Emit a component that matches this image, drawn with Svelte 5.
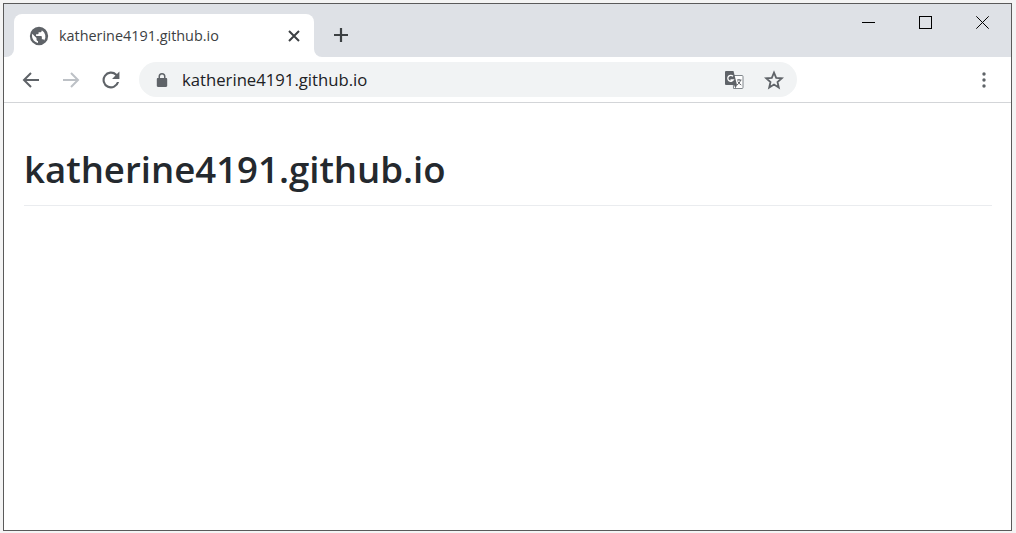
<script>
  const title = 'katherine4191.github.io';
</script>

<div class="window">
  <div class="tabstrip">
    <div class="tab">
      <svg class="favicon" width="20" height="20" viewBox="0 0 24 24"><path fill="#5f6368" d="M12 1a11 11 0 1 0 0 22 11 11 0 0 0 0-22zM3.600 12c0-.9.15-1.800.42-2.600L6.500 12l2.500 2.500v1.700c0 1 .8 1.800 1.800 1.800v2.300A8.400 8.400 0 0 1 3.600 12zm14.600 5.400c-.25-.75-.95-1.400-1.800-1.400h-1v-3c0-.55-.45-1-1-1H8.500v-2h2c.55 0 1-.45 1-1V7.500h2c1 0 1.800-.8 1.800-1.800v-.5a8.400 8.400 0 0 1 2.900 12.200z"/></svg>
      <span class="tab-title">{title}</span>
      <svg class="tab-close" width="12" height="12" viewBox="0 0 12 12"><path d="M1 1l10 10M11 1L1 11" stroke="#3c4043" stroke-width="2" fill="none"/></svg>
      <span class="curve left"></span>
      <span class="curve right"></span>
    </div>
    <svg class="new-tab" width="16" height="16" viewBox="0 0 16 16"><path d="M8 1v14M1 8h14" stroke="#3c4043" stroke-width="2.200" fill="none"/></svg>
    <div class="caption">
      <svg width="13" height="13" viewBox="0 0 13 13"><path d="M0 6.500h13" stroke="#000" fill="none"/></svg>
      <svg width="13" height="13" viewBox="0 0 13 13"><rect x=".5" y=".5" width="12" height="12" stroke="#000" fill="none"/></svg>
      <svg width="13" height="13" viewBox="0 0 13 13"><path d="M.3.300l12.400 12.400M12.700.300L.3 12.700" stroke="#000" fill="none"/></svg>
    </div>
  </div>

  <div class="toolbar">
    <svg class="nav" width="20" height="20" viewBox="0 0 20 20"><path d="M18 10H3M10 3l-7 7 7 7" stroke="#5f6368" stroke-width="2" fill="none"/></svg>
    <svg class="nav" width="20" height="20" viewBox="0 0 20 20"><path d="M2 10h15M10 3l7 7-7 7" stroke="#bdc1c6" stroke-width="2" fill="none"/></svg>
    <svg class="nav" width="20" height="20" viewBox="2.500 2.500 19 19"><path fill="#5f6368" d="M17.650 6.350A8 8 0 1 0 19.730 14h-2.080a6 6 0 1 1-1.410-6.240L13 11h7V4z"/></svg>
    <div class="omnibox">
      <svg class="lock" width="12" height="14" viewBox="0 0 12 14"><path fill="#5f6368" d="M10 5H9.500V3.500a3.500 3.500 0 0 0-7 0V5H2c-.8 0-1.200.5-1.200 1.200v6.600c0 .7.4 1.200 1.200 1.200h8c.8 0 1.200-.5 1.200-1.200V6.200c0-.7-.4-1.200-1.200-1.200zM4 5V3.500a2 2 0 0 1 4 0V5z"/></svg>
      <span class="url">{title}</span>
      <svg class="translate" width="20" height="20" viewBox="0 0 20 20">
        <path fill="#fff" stroke="#80868b" d="M9 5.500h9a1 1 0 0 1 1 1v11a1 1 0 0 1-1 1H9.500z"/>
        <path fill="#5f6368" d="M2 1h7.500l3.500 14H2a1 1 0 0 1-1-1V2a1 1 0 0 1 1-1z"/>
        <path fill="#5f6368" d="M10 15l1.500 3.500L13 15z"/>
        <path d="M9 6.200A3 3 0 1 0 9.300 10H6.500" stroke="#fff" stroke-width="1.300" fill="none"/>
        <path d="M13 10h4.500M15 9v1M16.500 10c-.5 2.500-2 4-3.500 5M13.800 11.500c.7 1.500 2 2.800 3.500 3.500" stroke="#5f6368" fill="none"/>
      </svg>
      <svg class="star" width="20" height="20" viewBox="0 0 20 20"><path d="M10 2.600l2.200 5.200 5.600.5-4.300 3.700 1.300 5.500L10 14.600l-4.800 2.900 1.300-5.500-4.300-3.700 5.600-.5z" stroke="#5f6368" stroke-width="1.800" fill="none"/></svg>
    </div>
    <svg class="menu" width="4" height="16" viewBox="0 0 4 16"><circle cx="2" cy="2" r="1.700" fill="#5f6368"/><circle cx="2" cy="8" r="1.700" fill="#5f6368"/><circle cx="2" cy="14" r="1.700" fill="#5f6368"/></svg>
  </div>

  <main class="page">
    <h1>{title}</h1>
  </main>
</div>

<style>
  :global(body) {
    margin: 0;
    background: #f4f4f4;
  }

  .window {
    box-sizing: border-box;
    width: 1009px;
    height: 528px;
    margin: 3px 0 0 3px;
    border: 1px solid #5a5a5a;
    background: #fff;
    display: flex;
    flex-direction: column;
    overflow: hidden;
  }

  .tabstrip {
    height: 53px;
    flex: none;
    display: flex;
    align-items: flex-end;
    background: #dee1e6;
    position: relative;
  }

  .tab {
    position: relative;
    box-sizing: border-box;
    width: 300px;
    height: 43px;
    margin-left: 10px;
    padding: 0 14px 0 15px;
    background: #fff;
    border-radius: 8px 8px 0 0;
    display: flex;
    align-items: center;
    flex: none;
  }

  .curve {
    position: absolute;
    bottom: 0;
    width: 8px;
    height: 8px;
    background: #fff;
  }

  .curve::after {
    content: '';
    display: block;
    width: 8px;
    height: 8px;
    background: #dee1e6;
  }

  .curve.left { left: -8px; }
  .curve.left::after { border-bottom-right-radius: 8px; }
  .curve.right { right: -8px; }
  .curve.right::after { border-bottom-left-radius: 8px; }

  .tab-title {
    margin-left: 10px;
    flex: 1;
    font: 14.4px "Open Sans", sans-serif;
    color: #3c4043;
  }

  .new-tab {
    margin: 0 0 14px 19px;
  }

  .caption {
    position: absolute;
    top: 12px;
    right: 22px;
    display: flex;
    gap: 44px;
  }

  .toolbar {
    height: 46px;
    flex: none;
    box-sizing: border-box;
    border-bottom: 1px solid #d3d5d8;
    display: flex;
    align-items: center;
    padding: 0 25px 0 17px;
    background: #fff;
  }

  .nav {
    margin-right: 20px;
  }

  .omnibox {
    margin-left: -2px;
    width: 658px;
    height: 35px;
    border-radius: 18px;
    background: #f1f3f4;
    display: flex;
    align-items: center;
    padding: 0 13px 0 17px;
    box-sizing: border-box;
  }

  .lock {
    flex: none;
  }

  .url {
    margin-left: 14px;
    flex: 1;
    font: 16.7px "Open Sans", sans-serif;
    color: #202124;
  }

  .translate {
    margin-right: 20px;
  }

  .menu {
    margin-left: auto;
  }

  .page {
    padding: 43px 19px 0 20px;
  }

  h1 {
    margin: 0;
    padding-bottom: 12px;
    border-bottom: 1px solid #eaecef;
    font: 600 36.6px/47px "Open Sans", sans-serif;
    color: #24292e;
  }
</style>
